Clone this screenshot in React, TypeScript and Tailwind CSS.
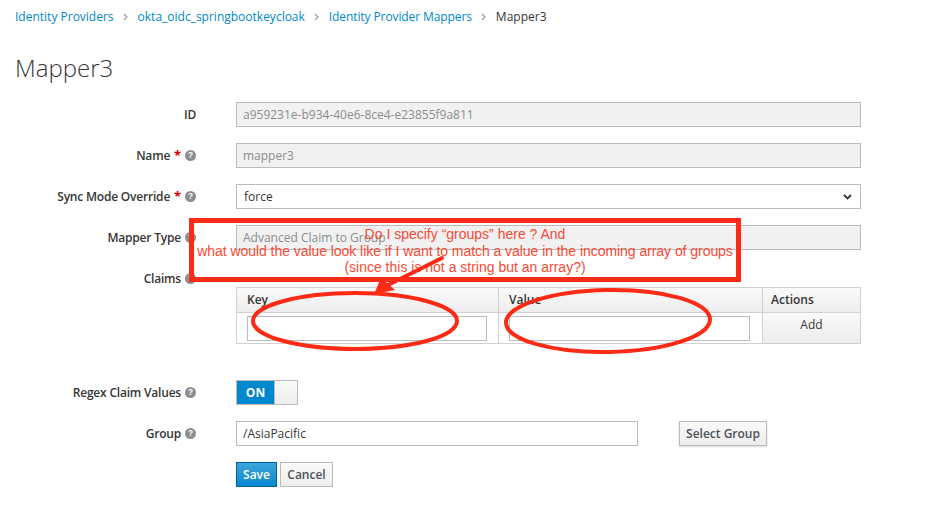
import React from "react";

const Help = () => (
  <svg width="11" height="11" viewBox="0 0 16 16" className="shrink-0">
    <circle cx="8" cy="8" r="8" fill="#8b8d8f" />
    <text x="8" y="12.3" textAnchor="middle" fontSize="12" fontWeight="700" fill="#fff" fontFamily="'Liberation Sans', Arial, sans-serif">?</text>
  </svg>
);

const Star = () => <span className="text-[#cc0000] font-bold text-[13px]">*</span>;

const Sep = () => (
  <svg width="6" height="8" viewBox="0 0 6 8" className="mx-[9px]">
    <path d="M1 1 L4 4 L1 7" fill="none" stroke="#9c9c9c" strokeWidth="1.2" />
  </svg>
);

function Row({ label, children, className = "" }: { label: React.ReactNode; children: React.ReactNode; className?: string }) {
  return (
    <div className={"flex items-start " + className}>
      <div className="w-[181px] h-[25px] flex justify-end items-center gap-[4px] text-[12px] tracking-[-0.2px] font-semibold text-[#363636]">
        {label}
      </div>
      <div className="ml-[40px]">{children}</div>
    </div>
  );
}

const disabledInput =
  "w-[625px] h-[25px] border border-[#bbbbbb] bg-[#f1f1f1] px-[6px] flex items-center text-[12px] text-[#8b8d8f]";

export default function App() {
  return (
    <div className="relative w-[935px] h-[509px] bg-white overflow-hidden" style={{ fontFamily: "'Open Sans', 'Noto Sans', sans-serif" }}>
      <div className="pl-[15px]">
        <div className="h-[34px] flex items-center text-[12px]">
          <span className="text-[#0088ce]">Identity Providers</span>
          <Sep />
          <span className="text-[#0088ce]">okta_oidc_springbootkeycloak</span>
          <Sep />
          <span className="text-[#0088ce] tracking-[-0.1px]">Identity Provider Mappers</span>
          <Sep />
          <span className="text-[#363636]">Mapper3</span>
        </div>
        <h1 className="mt-[21px] h-[26px] leading-[26px] text-[24px] font-light text-[#363636]">Mapper3</h1>

        <div className="mt-[21px] flex flex-col">
          <Row label={<span>ID</span>}>
            <div className={disabledInput}>a959231e-b934-40e6-8ce4-e23855f9a811</div>
          </Row>
          <Row className="mt-[16px]" label={<><span>Name</span><Star /><Help /></>}>
            <div className={disabledInput}>mapper3</div>
          </Row>
          <Row className="mt-[16px]" label={<><span>Sync Mode Override</span><Star /><Help /></>}>
            <div className="w-[625px] h-[25px] border border-[#bbbbbb] bg-white pl-[7px] pr-[8px] flex items-center justify-between text-[12px] text-[#363636]">
              <span>force</span>
              <svg width="9" height="6" viewBox="0 0 9 6">
                <path d="M1 1 L4.5 4.5 L8 1" fill="none" stroke="#363636" strokeWidth="1.8" />
              </svg>
            </div>
          </Row>
          <Row className="mt-[16px]" label={<><span>Mapper Type</span><Help /></>}>
            <div className={disabledInput}>Advanced Claim to Group</div>
          </Row>
          <Row className="mt-[16px]" label={<><span>Claims</span><Help /></>}>
            <div className="mt-[21px] w-[625px] border border-[#d1d1d1] text-[12px] text-[#363636]">
              <div className="flex h-[25px] bg-gradient-to-b from-[#fafafa] to-[#ededed] border-b border-[#d1d1d1] font-semibold">
                <div className="w-[262px] px-[10px] flex items-center border-r border-[#d1d1d1]">Key</div>
                <div className="w-[264px] px-[10px] flex items-center border-r border-[#d1d1d1]">Value</div>
                <div className="flex-1 px-[8px] flex items-center">Actions</div>
              </div>
              <div className="flex h-[30px]">
                <div className="w-[262px] pl-[10px] pr-[11px] flex items-center border-r border-[#d1d1d1]">
                  <div className="w-full h-[25px] border border-[#bbbbbb] bg-white" />
                </div>
                <div className="w-[264px] pl-[10px] pr-[12px] flex items-center border-r border-[#d1d1d1]">
                  <div className="w-full h-[25px] border border-[#bbbbbb] bg-white" />
                </div>
                <div className="flex-1 flex items-start justify-center pt-[3px] bg-gradient-to-b from-[#fafafa] to-[#ededed] text-[#363636]">Add</div>
              </div>
            </div>
          </Row>
          <Row className="mt-[36px]" label={<><span>Regex Claim Values</span><Help /></>}>
            <div className="w-[62px] h-[25px] border border-[#bbbbbb] flex">
              <div className="w-[37px] bg-[#0088ce] text-white text-[12px] font-bold flex items-center justify-center">ON</div>
              <div className="flex-1 bg-gradient-to-b from-[#fafafa] to-[#ededed] border-l border-[#bbbbbb]" />
            </div>
          </Row>
          <Row className="mt-[16px]" label={<><span>Group</span><Help /></>}>
            <div className="flex items-center">
              <div className="w-[402px] h-[25px] border border-[#bbbbbb] bg-white px-[6px] flex items-center text-[12px] text-[#363636]">/AsiaPacific</div>
              <div className="ml-[41px] w-[88px] h-[25px] border border-[#bbbbbb] bg-gradient-to-b from-[#fafafa] to-[#ededed] shadow-[0_1px_2px_rgba(0,0,0,0.15)] flex items-center justify-center text-[12px] font-semibold text-[#4d5258]">Select Group</div>
            </div>
          </Row>
          <Row className="mt-[16px]" label={<span />}>
            <div className="flex gap-[3px]">
              <div className="w-[41px] h-[25px] border border-[#00659c] bg-gradient-to-b from-[#39a5dc] to-[#0088ce] flex items-center justify-center text-[12px] font-semibold text-white">Save</div>
              <div className="w-[53px] h-[25px] border border-[#bbbbbb] bg-gradient-to-b from-[#fafafa] to-[#ededed] flex items-center justify-center text-[12px] font-semibold text-[#4d5258]">Cancel</div>
            </div>
          </Row>
        </div>
      </div>

      {/* annotation box */}
      <div
        className="absolute left-[189px] top-[218px] w-[552px] h-[64px] border-[5px] border-[#fd2a15] flex flex-col items-center pt-[3px] text-[14px] leading-[16.5px] text-[#f84a35]"
        style={{ fontFamily: "'Liberation Sans', Arial, sans-serif" }}
      >
        <div className="whitespace-nowrap">Do I specify “groups” here ? And</div>
        <div className="whitespace-nowrap tracking-[-0.05px]">what would the value look like if I want to match a value in the incoming array of groups</div>
        <div className="whitespace-nowrap">(since this is not a string but an array?)</div>
      </div>

      {/* annotation drawings */}
      <svg className="absolute left-0 top-0 pointer-events-none" width="935" height="509" viewBox="0 0 935 509">
        <ellipse cx="355" cy="321" rx="102" ry="28" fill="none" stroke="#fd2a15" strokeWidth="4" />
        <ellipse cx="608" cy="321" rx="102" ry="31" fill="none" stroke="#fd2a15" strokeWidth="4" transform="rotate(-1 608 321)" />
        <line x1="442" y1="258" x2="388" y2="285" stroke="#fd2a15" strokeWidth="4" strokeLinecap="round" />
        <polygon points="374,294 381,278 395,290" fill="#fd2a15" />
      </svg>
    </div>
  );
}
